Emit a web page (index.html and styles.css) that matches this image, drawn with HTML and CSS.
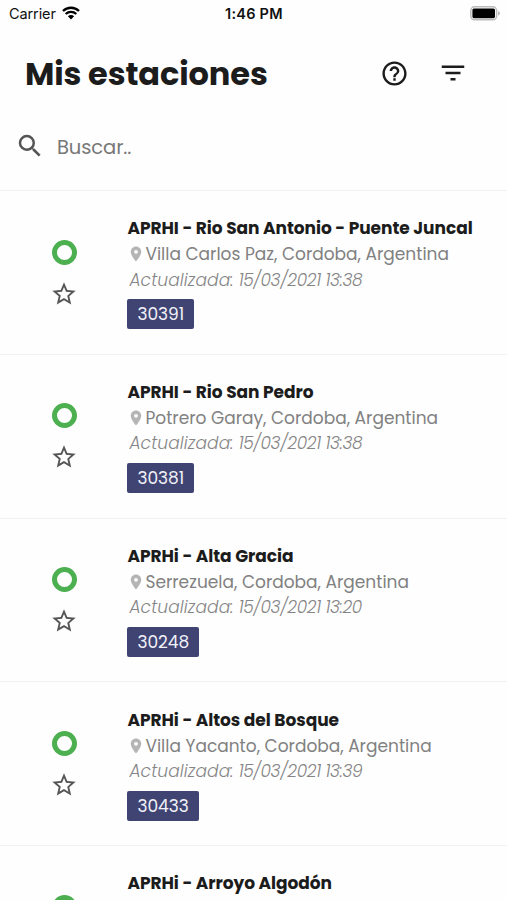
FILE: index.html
```
<!DOCTYPE html>
<html lang="es">
<head>
<meta charset="utf-8">
<title>Mis estaciones</title>
<link rel="stylesheet" href="styles.css">
</head>
<body>
<svg class="defs" aria-hidden="true">
  <symbol id="star" viewBox="0 0 24 24"><path d="M22 9.24l-7.19-.62L12 2 9.19 8.63 2 9.24l5.46 4.73L5.82 21 12 17.27 18.18 21l-1.63-7.03L22 9.24zM12 15.4l-3.76 2.27 1-4.28-3.32-2.88 4.38-.38L12 6.1l1.71 4.04 4.38.38-3.32 2.88 1 4.28L12 15.4z"/></symbol>
  <symbol id="pin" viewBox="0 0 24 24"><path d="M12 2C8.13 2 5 5.13 5 9c0 5.25 7 13 7 13s7-7.75 7-13c0-3.87-3.13-7-7-7zm0 9.500a2.500 2.500 0 1 1 0-5 2.500 2.500 0 0 1 0 5z"/></symbol>
</svg>
<div class="screen">
  <div class="status">
    <span class="carrier">Carrier</span>
    <svg class="wifi" viewBox="0 0 18 14"><path d="M1 5a11.500 11.500 0 0 1 16 0M3.700 8a7.600 7.600 0 0 1 10.600 0"/><path class="dot" d="M9 13.500L5.900 10.300a4.400 4.400 0 0 1 6.200 0z"/></svg>
    <span class="time">1:46 PM</span>
    <svg class="battery" viewBox="0 0 30 15"><rect class="shell" x=".8" y=".8" width="25.800" height="13" rx="3.800"/><rect x="2.400" y="2.400" width="22.600" height="9.800" rx="1.600"/><path class="tip" d="M28 5v4.600q2-.7 2-2.300T28 5z"/></svg>
  </div>
  <header class="header">
    <h1 class="heading">Mis estaciones</h1>
    <svg class="help" viewBox="0 0 24 24"><path d="M11 18h2v-2h-2v2zm1-16C6.480 2 2 6.480 2 12s4.480 10 10 10 10-4.480 10-10S17.520 2 12 2zm0 18c-4.410 0-8-3.590-8-8s3.590-8 8-8 8 3.590 8 8-3.590 8-8 8zm0-14c-2.210 0-4 1.790-4 4h2c0-1.100.9-2 2-2s2 .9 2 2c0 2-3 1.750-3 5h2c0-2.250 3-2.500 3-5 0-2.210-1.790-4-4-4z"/></svg>
    <svg class="filter" viewBox="0 0 24 24"><path d="M10 18h4v-2h-4v2zM3 6v2h18V6H3zm3 7h12v-2H6v2z"/></svg>
  </header>
  <div class="search">
    <svg class="glass" viewBox="0 0 24 24"><path d="M15.500 14h-.79l-.28-.27A6.470 6.470 0 0 0 16 9.500 6.500 6.500 0 1 0 9.500 16c1.610 0 3.090-.59 4.230-1.570l.27.28v.79l5 4.990L20.490 19l-4.990-5zm-6 0a4.500 4.500 0 1 1 0-9 4.500 4.500 0 0 1 0 9z"/></svg>
    <span class="hint">Buscar..</span>
  </div>
  <main class="list">
    <article class="row">
      <div class="marks"><i class="ring"></i><svg class="star"><use href="#star"/></svg></div>
      <div class="info">
        <h2 class="name">APRHI - Rio San Antonio - Puente Juncal</h2>
        <p class="place"><svg class="pin"><use href="#pin"/></svg>Villa Carlos Paz, Cordoba, Argentina</p>
        <p class="updated">Actualizada: <time class="stamp">15/03/2021 13:38</time></p>
        <span class="code">30391</span>
      </div>
    </article>
    <article class="row">
      <div class="marks"><i class="ring"></i><svg class="star"><use href="#star"/></svg></div>
      <div class="info">
        <h2 class="name">APRHI - Rio San Pedro</h2>
        <p class="place"><svg class="pin"><use href="#pin"/></svg>Potrero Garay, Cordoba, Argentina</p>
        <p class="updated">Actualizada: <time class="stamp">15/03/2021 13:38</time></p>
        <span class="code">30381</span>
      </div>
    </article>
    <article class="row">
      <div class="marks"><i class="ring"></i><svg class="star"><use href="#star"/></svg></div>
      <div class="info">
        <h2 class="name">APRHi - Alta Gracia</h2>
        <p class="place"><svg class="pin"><use href="#pin"/></svg>Serrezuela, Cordoba, Argentina</p>
        <p class="updated">Actualizada: <time class="stamp">15/03/2021 13:20</time></p>
        <span class="code">30248</span>
      </div>
    </article>
    <article class="row">
      <div class="marks"><i class="ring"></i><svg class="star"><use href="#star"/></svg></div>
      <div class="info">
        <h2 class="name">APRHi - Altos del Bosque</h2>
        <p class="place"><svg class="pin"><use href="#pin"/></svg>Villa Yacanto, Cordoba, Argentina</p>
        <p class="updated">Actualizada: <time class="stamp">15/03/2021 13:39</time></p>
        <span class="code">30433</span>
      </div>
    </article>
    <article class="row">
      <div class="marks"><i class="ring"></i></div>
      <div class="info">
        <h2 class="name">APRHi - Arroyo Algodón</h2>
      </div>
    </article>
  </main>
</div>
</body>
</html>
```
FILE: styles.css
```
* { box-sizing: border-box; }
body, h1, h2, p { margin: 0; }
body { background: #fefefe; font-family: Poppins, Inter, sans-serif; color: #1c1c1c; }
svg { display: block; flex: none; }
.defs { display: none; }
.screen { width: 507px; height: 900px; overflow: hidden; }

.status { display: flex; align-items: center; height: 28px; padding: 0 6px 2px 9px; color: #111; font-family: Inter, sans-serif; font-size: 14.500px; }
.carrier { width: 47px; letter-spacing: -.1px; }
.wifi { width: 18px; height: 14px; margin: -1px 0 0 6px; fill: none; stroke: #000; stroke-width: 2.300; }
.wifi .dot { fill: #000; stroke: none; }
.time { margin-left: 145px; font-weight: 600; white-space: nowrap; letter-spacing: .25px; }
.battery { width: 30px; height: 15px; margin-left: auto; margin-right: 1px; }
.battery .shell { fill: #fff; stroke: #bbb; stroke-width: 1.500; }
.battery .tip { fill: #bbb; }

.header { display: flex; align-items: center; height: 90px; padding-left: 25px; }
.heading { width: 355px; padding-top: 1px; font-size: 32px; line-height: 48px; font-weight: 700; letter-spacing: -.1px; white-space: nowrap; }
.help { width: 29px; height: 29px; fill: #1c1c1c; }
.filter { width: 30px; height: 30px; margin-left: 29px; fill: #1c1c1c; }

.search { display: flex; align-items: center; height: 72px; padding: 0 0 16px 15px; }
.glass { width: 30px; height: 30px; fill: #555; }
.hint { margin-left: 12px; padding-top: 2px; color: #777; font-size: 19.500px; letter-spacing: -.1px; }

.row { display: flex; height: 163.800px; border-top: 1.500px solid #f1f1f1; }
.marks { display: flex; flex-direction: column; align-items: center; width: 128px; padding-top: 48.500px; }
.ring { width: 25px; height: 25px; border: 5px solid #4caf50; border-radius: 50%; flex: none; }
.star { width: 28px; height: 28px; margin-top: 15px; fill: #555; }
.info { margin-left: -.6px; padding-top: 24.200px; white-space: nowrap; }
.name { font-size: 17px; line-height: 26px; font-weight: 700; letter-spacing: -.045px; }
.place { display: flex; align-items: center; font-size: 17px; line-height: 26px; color: #818181; }
.pin { width: 18px; height: 18px; fill: #b5b5b5; }
.updated { padding: .5px 0 0 2px; font-size: 17px; line-height: 25px; font-style: italic; font-weight: 300; letter-spacing: .12px; color: #858585; }
.stamp { letter-spacing: -.36px; }
.code { display: flex; align-items: center; width: fit-content; height: 30px; margin-top: 6.500px; padding: 0 10px; border-radius: 2px; background: #404473; color: #f1f1f8; font-size: 17px; }
```
